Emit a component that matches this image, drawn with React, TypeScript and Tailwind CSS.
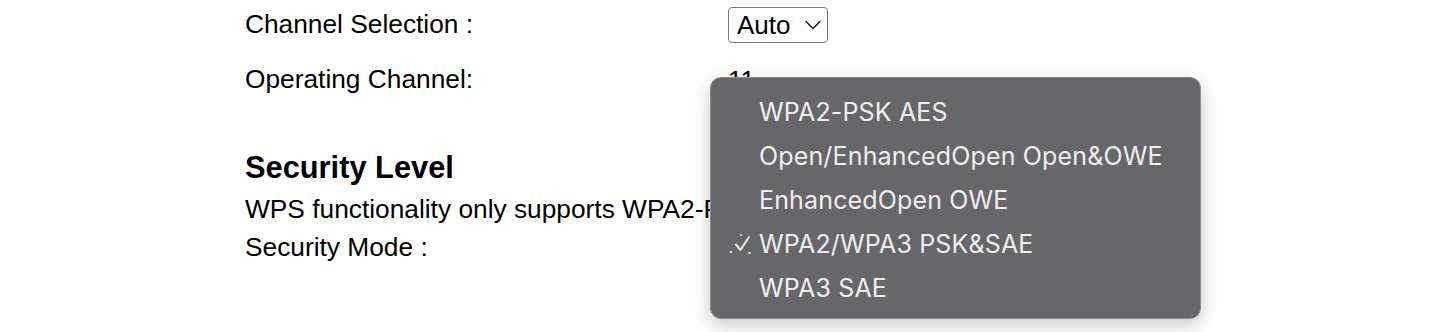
const modes = [
  { label: "WPA2-PSK AES", checked: false },
  { label: "Open/EnhancedOpen Open&OWE", checked: false },
  { label: "EnhancedOpen OWE", checked: false },
  { label: "WPA2/WPA3 PSK&SAE", checked: true },
  { label: "WPA3 SAE", checked: false },
];

function Check() {
  return (
    <svg width="28" height="28" viewBox="0 0 28 28" className="shrink-0">
      <path d="M8 14.5 L12.5 20 L21 7" fill="none" stroke="#f4f4f4" strokeWidth="2" strokeLinecap="round" strokeLinejoin="round" />
      <circle cx="3" cy="22" r="1.3" fill="#d4d4d4" />
      <circle cx="13" cy="5" r="1.3" fill="#c4c4c4" />
      <circle cx="21.5" cy="23" r="1.3" fill="#d4d4d4" />
    </svg>
  );
}

function ModeMenu() {
  return (
    <div className="absolute left-[710px] top-[77px] flex h-[242px] w-[491px] flex-col rounded-[11px] border border-[#8c8b8f] bg-[#676669] pt-[12px] shadow-[0_6px_18px_rgba(0,0,0,0.22)]">
      {modes.map((m) => (
        <div key={m.label} className="flex h-[44px] items-center">
          <span className="flex w-[48px] justify-end pr-[3px]">{m.checked && <Check />}</span>
          <span className="text-[25px] leading-none tracking-[0.15px] text-[#efeff0]" style={{ fontFamily: "Inter, 'Liberation Sans', sans-serif" }}>
            {m.label}
          </span>
        </div>
      ))}
    </div>
  );
}

export default function App() {
  return (
    <div className="relative h-[332px] w-full overflow-hidden bg-white text-black" style={{ fontFamily: "'Liberation Sans', Arial, sans-serif" }}>
      <div className="pl-[245px] pt-[7px]">
        <div className="flex h-[36px] items-center">
          <span className="w-[483px] text-[26.3px]">Channel Selection :</span>
          <div className="flex h-[36px] w-[100px] items-center justify-between rounded-[4px] border border-[#7a7a7a] pl-[8px] pr-[6px]">
            <span className="text-[26px] leading-none">Auto</span>
            <svg width="16" height="10" viewBox="0 0 16 10">
              <path d="M1 1.5 L8 8.5 L15 1.5" fill="none" stroke="#111" strokeWidth="1.4" strokeLinecap="round" strokeLinejoin="round" />
            </svg>
          </div>
        </div>
        <div className="mt-[19px] flex h-[36px] items-center">
          <span className="w-[483px] text-[26.3px]">Operating Channel:</span>
          <span className="text-[26px]">11</span>
        </div>
        <h3 className="mt-[52px] text-[30.8px] font-bold leading-[35px]">Security Level</h3>
        <p className="mt-[9px] h-[30px] text-[26.3px] leading-[30px] whitespace-nowrap">WPS functionality only supports WPA2-PSK AES</p>
        <p className="mt-[8px] h-[30px] text-[26.3px] leading-[30px]">Security Mode :</p>
      </div>
      <ModeMenu />
    </div>
  );
}
